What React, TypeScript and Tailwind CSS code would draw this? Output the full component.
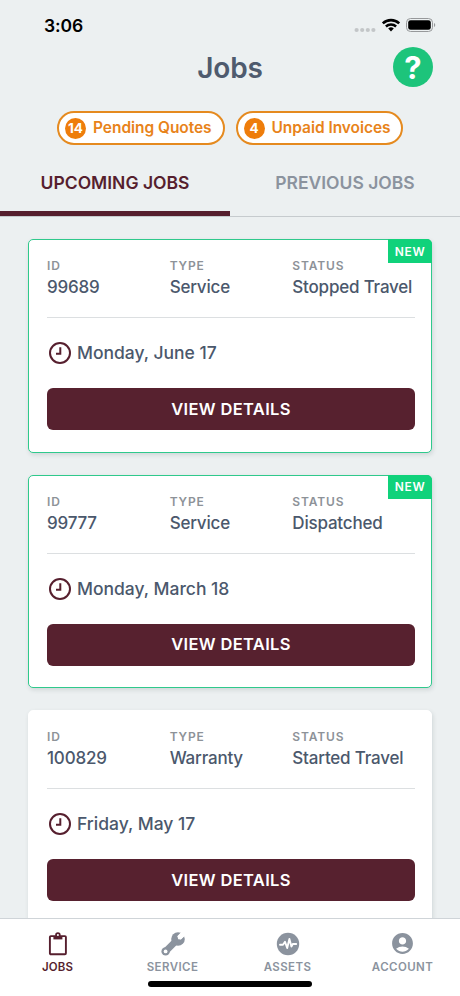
import { MdAccountCircle } from "react-icons/md"

type Job = {
    id: string
    type: string
    status: string
    date: string
    isNew: boolean
}

const jobs: Job[] = [
    { id: "99689", type: "Service", status: "Stopped Travel", date: "Monday, June 17", isNew: true },
    { id: "99777", type: "Service", status: "Dispatched", date: "Monday, March 18", isNew: true },
    { id: "100829", type: "Warranty", status: "Started Travel", date: "Friday, May 17", isNew: false },
]

function StatusBar() {
    return (
        <div className="flex items-center justify-between h-[47px] pt-[3px] pl-11 pr-[24px] text-black">
            <span className="pt-[2px] text-[17.5px] font-semibold tracking-[-0.1px]">3:06</span>
            <div className="flex items-center">
                <svg width="22" height="6" viewBox="0 0 22 6" fill="#c3c6c8" className="mt-[10px] mr-[5px]">
                    <circle cx="2.6" cy="3" r="2.1" />
                    <circle cx="8.2" cy="3" r="2.1" />
                    <circle cx="13.8" cy="3" r="2.1" />
                    <circle cx="19.4" cy="3" r="2.1" />
                </svg>
                <svg width="20" height="14" viewBox="0 0 20 14" className="mr-[5px]">
                    <path d="M1.8 5.4a11.8 11.8 0 0 1 16.4 0" fill="none" stroke="#000" strokeWidth="2.6" />
                    <path d="M4.9 8.5a7.4 7.4 0 0 1 10.2 0" fill="none" stroke="#000" strokeWidth="2.5" />
                    <path d="M10 13.4l-2.8-2.8a4 4 0 0 1 5.6 0z" fill="#000" />
                </svg>
                <svg width="30" height="14" viewBox="0 0 30 14">
                    <rect x=".5" y=".5" width="26" height="13" rx="4" fill="none" stroke="#97999b" />
                    <rect x="2.2" y="2.2" width="22.6" height="9.6" rx="2.4" fill="#000" />
                    <path d="M28 4.9c1.7.7 1.7 3.5 0 4.2z" fill="#97999b" />
                </svg>
            </div>
        </div>
    )
}

function Pill({ count, label }: { count: number; label: string }) {
    return (
        <button className="flex items-center h-[34px] w-[167.5px] pl-[6px] rounded-full border-2 border-[#e58a1f] bg-white text-[#e8831a]">
            <span className="flex items-center justify-center size-[21px] rounded-full bg-[#ee7d0b] text-white text-[13.5px] font-bold">{count}</span>
            <span className="ml-[7px] text-[15.5px] font-semibold tracking-[-0.05px] whitespace-nowrap">{label}</span>
        </button>
    )
}

function ClockIcon() {
    return (
        <svg width="24" height="24" viewBox="0 0 24 24" fill="none" stroke="#561f2e" strokeWidth="2">
            <circle cx="12" cy="12" r="10" />
            <path d="M12.3 6.3v6.4H8" />
        </svg>
    )
}

function Field({ label, value }: { label: string; value: string }) {
    return (
        <div className="flex flex-col">
            <span className="text-[12px] leading-4 font-semibold tracking-[0.85px] text-[#8d9298]">{label}</span>
            <span className="pt-px text-[17px] leading-6 font-medium tracking-[-0.2px] whitespace-nowrap text-[#4b586c]">{value}</span>
        </div>
    )
}

function JobCard({ job }: { job: Job }) {
    return (
        <div className={`relative h-[213.5px] shrink-0 rounded-[5px] border bg-white pl-[18px] pr-[16px] pt-[18px] shadow-[1px_2px_4px_rgba(60,80,90,0.16)] ${job.isNew ? "border-[#2fc98c]" : "border-white"}`}>
            {job.isNew && (
                <span className="absolute -top-px -right-px flex items-center justify-center w-11 h-6 pt-px rounded-tr-[5px] bg-[#10d27b] text-white text-[12px] font-semibold tracking-[0.7px]">NEW</span>
            )}
            <div className="grid grid-cols-3 h-[60px] border-b border-[#dcdfe1]">
                <Field label="ID" value={job.id} />
                <Field label="TYPE" value={job.type} />
                <Field label="STATUS" value={job.status} />
            </div>
            <div className="flex items-center gap-[5px] h-[70px] pl-px">
                <ClockIcon />
                <span className="pt-px text-[17.5px] font-medium tracking-[-0.02px] text-[#4b586c]">{job.date}</span>
            </div>
            <button className="w-full h-[42px] rounded-md bg-[#57212f] text-white text-[16.5px] font-semibold tracking-[0.35px]">VIEW DETAILS</button>
        </div>
    )
}

function ClipboardIcon() {
    return (
        <svg width="20" height="24" viewBox="0 0 20 24" fill="none" stroke="currentColor">
            <rect x="1.9" y="4.1" width="16" height="18.2" rx="1" strokeWidth="1.9" />
            <path d="M5.4 4h9v3.4h-9z" fill="currentColor" stroke="none" />
            <circle cx="9.9" cy="3" r="1.9" fill="#fff" strokeWidth="1.7" />
        </svg>
    )
}

function WrenchIcon() {
    return (
        <svg width="24" height="24" viewBox="0 0 24 24" fill="none">
            <path d="M4.6 19.4L15.6 8.4" stroke="#8b939e" strokeWidth="6.6" strokeLinecap="round" />
            <circle cx="17" cy="7" r="6.8" fill="#8b939e" />
            <path d="M18.1 5.9L24 0" stroke="#fff" strokeWidth="4.8" />
            <path d="M16.4 4.2l3.4-3.4 3.4 3.4-3.4 3.4-2.6-.4z" fill="#fff" />
            <circle cx="4.6" cy="19.4" r="4.2" fill="#8b939e" />
            <circle cx="4.6" cy="19.4" r="1.9" fill="#fff" />
        </svg>
    )
}

function PulseIcon() {
    return (
        <svg width="24" height="24" viewBox="0 0 24 24" fill="none">
            <circle cx="12" cy="12" r="11.2" fill="#8b939e" />
            <path d="M4 12.7h3l2-3 2.2 6.3 2.2-9 2 7.6 1.4-2.6h3.4" stroke="#fff" strokeWidth="1.9" strokeLinejoin="round" strokeLinecap="round" />
        </svg>
    )
}

function BottomNav() {
    return (
        <div className="flex flex-col items-center h-[78px] shrink-0 border-t border-[#cfd4d8] bg-white">
            <ul className="grid grid-cols-4 w-full h-[62px] pt-[12px] text-[#8b939e] text-[11.5px] font-semibold tracking-[0.4px]">
                <li className="flex flex-col items-center text-[#561f2e]">
                    <span className="flex items-center h-[25px]"><ClipboardIcon /></span>
                    <span className="mt-[2px] tracking-[0.1px] leading-[18px]">JOBS</span>
                </li>
                <li className="flex flex-col items-center">
                    <span className="flex items-center h-[25px]"><WrenchIcon /></span>
                    <span className="mt-[2px] leading-[18px]">SERVICE</span>
                </li>
                <li className="flex flex-col items-center">
                    <span className="flex items-center h-[25px]"><PulseIcon /></span>
                    <span className="mt-[2px] leading-[18px]">ASSETS</span>
                </li>
                <li className="flex flex-col items-center">
                    <span className="flex items-center h-[25px]"><MdAccountCircle size={25} /></span>
                    <span className="mt-[2px] leading-[18px]">ACCOUNT</span>
                </li>
            </ul>
            <div className="w-[164px] h-[6px] rounded-full bg-black" />
        </div>
    )
}

export default function App() {
    return (
        <div className="flex flex-col w-[460px] h-[996px] overflow-hidden bg-[#ecf0f1] font-['Inter',sans-serif]">
            <StatusBar />
            <div className="grid grid-cols-[1fr_auto_1fr] items-center h-10 px-[27px]">
                <span />
                <h1 className="pt-[2px] text-[28px] leading-8 font-semibold tracking-[-0.2px] text-[#4f5b6e]">Jobs</h1>
                <button className="justify-self-end flex items-center justify-center size-10 rounded-full bg-[#1dc47b] text-white text-[31px] leading-none font-bold">?</button>
            </div>
            <div className="flex justify-center gap-[11px] mt-[24px]">
                <Pill count={14} label="Pending Quotes" />
                <Pill count={4} label="Unpaid Invoices" />
            </div>
            <div className="grid grid-cols-2 h-[72px] shrink-0 border-b border-[#c6cbce] text-[17.5px] font-semibold text-center leading-[76px]">
                <div className="h-[71px] border-b-[5px] border-[#561f2e] text-[#561f2e]">UPCOMING JOBS</div>
                <div className="text-[#8b939e]">PREVIOUS JOBS</div>
            </div>
            <div className="flex flex-col gap-[22px] flex-1 min-h-0 overflow-hidden px-7 pt-[22px]">
                {jobs.map((job) => <JobCard key={job.id} job={job} />)}
            </div>
            <BottomNav />
        </div>
    )
}
